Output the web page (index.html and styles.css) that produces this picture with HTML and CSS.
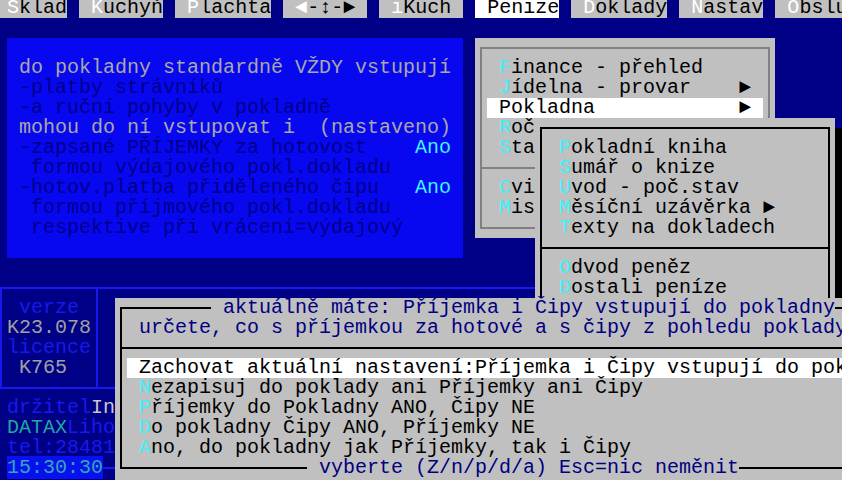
FILE: index.html
```html
<!DOCTYPE html>
<html lang="cs">
<head>
    <meta charset="UTF-8">
    <title>Penize - Pokladna</title>
    <link rel="stylesheet" href="styles.css">
</head>
<body>
    <div class="screen">
        <div class="menubar">
            <span class="mi"> <span class="key">S</span>klad</span>
            <span class="mi"> <span class="key">K</span>uchyň</span>
            <span class="mi"> <span class="key">P</span>lachta</span>
            <span class="mi"> <span class="key">◄</span>-↕-► </span>
            <span class="mi"> <span class="key">i</span>Kuch </span>
            <span class="mi active"> Penize</span>
            <span class="mi"> <span class="key">D</span>oklady</span>
            <span class="mi"> <span class="key">N</span>astav</span>
            <span class="mi"> <span class="key">O</span>bsluha</span>
        </div>

        <div class="desk">
            <!-- info panel: what goes into the cash book -->
            <div class="notice">
                <div class="ln lite">do pokladny standardně VŽDY vstupují</div>
                <div class="ln">-platby strávníků</div>
                <div class="ln">-a ruční pohyby v pokladně</div>
                <div class="ln lite">mohou do ní vstupovat i  (nastaveno)</div>
                <div class="ln">-zapsané PŘÍJEMKY za hotovost    <span class="yes">Ano</span></div>
                <div class="ln"> formou výdajového pokl.dokladu</div>
                <div class="ln">-hotov.platba přiděleného čipu   <span class="yes">Ano</span></div>
                <div class="ln"> formou příjmového pokl.dokladu</div>
                <div class="ln"> respektive při vrácení=výdajový</div>
            </div>

            <!-- status corner: version, licence, owner, clock -->
            <div class="status-head">
                <div class="ver">
                    <div class="ln dim"> verze</div>
                    <div class="ln">K23.078</div>
                    <div class="ln dim">licence</div>
                    <div class="ln"> K765</div>
                </div>
            </div>
            <div class="holder">
                <div class="ln"><span class="dim">držitel</span><span class="owner">In</span></div>
                <div class="ln"><span class="teal">DATAX</span><span class="dim">Liho</span></div>
                <div class="ln dim">tel:28481</div>
                <div class="ln"><span class="clock">15:30:30</span><span class="tick"></span></div>
            </div>
        </div>

        <!-- Penize dropdown -->
        <div class="win dropdown">
            <div class="frame">
                <div class="ln"> <span class="hk">F</span>inance - přehled</div>
                <div class="ln"> <span class="hk">J</span>ídelna - provar    ►</div>
                <div class="ln sel"> Pokladna            ►</div>
                <div class="ln"> <span class="hk">R</span>oční uzávěrka</div>
                <div class="ln"> <span class="hk">S</span>tatistiky</div>
                <div class="sep"></div>
                <div class="ln"> <span class="hk">C</span>vičná data</div>
                <div class="ln"> <span class="hk">M</span>isto uložení</div>
            </div>
        </div>

        <!-- Pokladna submenu -->
        <div class="win submenu">
            <div class="frame">
                <div class="ln"> <span class="hk">P</span>okladní kniha</div>
                <div class="ln"> <span class="hk">S</span>umář o knize</div>
                <div class="ln"> <span class="hk">U</span>vod - poč.stav</div>
                <div class="ln"> <span class="hk">M</span>ěsíční uzávěrka ►</div>
                <div class="ln"> <span class="hk">T</span>exty na dokladech</div>
                <div class="sep"></div>
                <div class="ln"> <span class="hk">O</span>dvod peněz</div>
                <div class="ln"> <span class="hk">D</span>ostali peníze</div>
                <div class="ln"> <span class="hk">V</span>ýběr z banky</div>
            </div>
        </div>

        <!-- question dialog -->
        <div class="win dialog">
            <div class="frame">
                <div class="ln navy"> určete, co s příjemkou za hotové a s čipy z pohledu poklady</div>
                <div class="sep"></div>
                <div class="ln sel"> Zachovat aktuální nastavení:Příjemka i Čipy vstupují do pokladny</div>
                <div class="ln"> <span class="hk">N</span>ezapisuj do poklady ani Příjemky ani Čipy</div>
                <div class="ln"> <span class="hk">P</span>říjemky do Pokladny ANO, Čipy NE</div>
                <div class="ln"> <span class="hk">D</span>o pokladny Čipy ANO, Příjemky NE</div>
                <div class="ln"> <span class="hk">A</span>no, do pokladny jak Příjemky, tak i Čipy</div>
            </div>
            <div class="title"> aktuálně máte: Příjemka i Čipy vstupují do pokladny</div>
            <div class="footer"> vyberte (Z/n/p/d/a) Esc=nic neměnit</div>
        </div>
    </div>
</body>
</html>
```

FILE: styles.css
```css
* {
    box-sizing: border-box;
}

html, body {
    margin: 0;
    padding: 0;
    background-color: #000086;
    overflow: hidden;
}

body {
    font-family: 'Liberation Mono', 'DejaVu Sans Mono', monospace;
    font-size: 20px;
    line-height: 20px;
    color: #a8a8a8;
}

/* 80x25 text screen, 12x20 cells, shifted a bit like the capture */
.screen {
    position: relative;
    width: 960px;
    height: 500px;
    margin: -2px 0 0 -5px;
}

.ln {
    height: 20px;
    white-space: pre;
}

/* top menu */
.menubar {
    display: flex;
    gap: 12px;
    height: 20px;
}

.mi {
    white-space: pre;
    background-color: #c0c0c0;
    color: #000;
}

.mi.active {
    background-color: #fff;
}

.mi .key {
    color: #fff;
}

.desk {
    display: flex;
    flex-direction: column;
}

/* blue notice panel */
.notice {
    width: 456px;
    height: 220px;
    margin: 20px 0 0 12px;
    padding: 20px 12px 0;
    background-color: #0808f0;
    color: #00008a;
}

.notice .lite {
    color: #a8a8a8;
}

.yes {
    color: #40f0ff;
}

/* status corner */
.status-head {
    display: flex;
    margin: 29px 0 9px 5px;
    border-top: 2px solid #1818ee;
    border-bottom: 2px solid #1818ee;
    border-left: 2px solid #1818ee;
}

.ver {
    width: 96px;
    padding: 9px 5px;
    border-right: 2px solid #1818ee;
    color: #a0a0a0;
}

.dim {
    color: #1818ee;
}

.holder {
    margin-left: 12px;
}

.owner {
    color: #c8c8c8;
}

.teal {
    color: #20a8a0;
}

.clock {
    background-color: #0810f0;
    color: #30a8b8;
}

.tick {
    display: inline-block;
    width: 12px;
    height: 11px;
    vertical-align: top;
    border-bottom: 2px solid #1818ee;
}

/* windows */
.win {
    position: absolute;
    padding: 9px 5px;
    background-color: #c0c0c0;
    color: #000;
}

.frame {
    border: 2px solid #000;
    padding: 9px 5px;
}

.hk {
    color: #40f0f8;
}

.sel {
    background-color: #fff;
    color: #000;
}

.sep {
    height: 20px;
    margin: 0 -5px;
    position: relative;
}

.sep::before {
    content: "";
    position: absolute;
    left: 0;
    right: 0;
    top: 9px;
    height: 2px;
    background-color: #000;
}

.dropdown {
    left: 480px;
    top: 40px;
    width: 300px;
    height: 200px;
}

.dropdown .frame {
    border-color: #808080;
}

.dropdown .sep::before {
    background-color: #808080;
}

.submenu {
    left: 540px;
    top: 120px;
    width: 300px;
    height: 240px;
    box-shadow: 12px 10px 0 #000;
}

.dialog {
    left: 120px;
    top: 300px;
    width: 888px;
    padding-bottom: 29px;
}

.navy {
    color: #000080;
}

.dialog .title,
.dialog .footer {
    position: absolute;
    height: 20px;
    white-space: pre;
    background-color: #c0c0c0;
    color: #000080;
}

.dialog .title {
    left: 96px;
    top: 0;
}

.dialog .footer {
    left: 192px;
    top: 160px;
}
```
